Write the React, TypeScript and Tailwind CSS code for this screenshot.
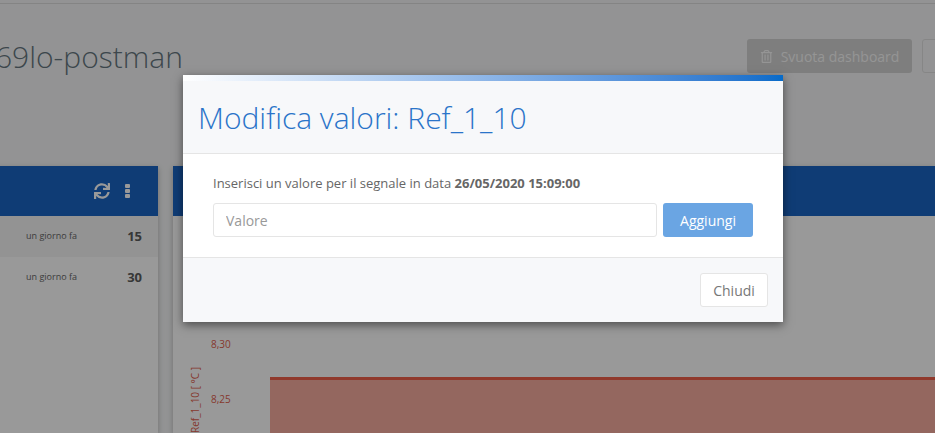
import { FaSync, FaRegTrashAlt } from "react-icons/fa";

const rows = [
  { when: "un giorno fa", value: 15, shaded: true },
  { when: "un giorno fa", value: 30, shaded: false },
];

export default function App() {
  return (
    <div className="relative h-[433px] w-[935px] overflow-hidden bg-[#f5f6f7] font-['Open_Sans',sans-serif]">
      {/* dashboard behind the dialog */}
      <div className="h-[4px] border-b border-[#dcdcdc] bg-[#f5f6f7]" />
      <div className="flex h-[162px] items-start justify-between">
        <h1 className="-ml-[5px] mt-[32px] whitespace-nowrap text-[30px] leading-[42px] font-light text-[#66767f]">
          69lo-postman
        </h1>
        <div className="mt-[35px] flex gap-[10px] -mr-[60px]">
          <button className="flex h-[34px] w-[165px] items-center justify-center gap-[8px] rounded-[3px] bg-[#d2d2d2] text-[14px] text-[#f8f8f8]">
            <FaRegTrashAlt className="h-[13px] w-[13px]" />
            Svuota dashboard
          </button>
          <button className="h-[34px] w-[73px] rounded-[3px] border border-[#e0e0e0] bg-[#f5f6f7]" />
        </div>
      </div>
      <div className="flex h-[267px] gap-[15px]">
        <div className="-ml-[20px] w-[178px] shrink-0 bg-white shadow-[0_2px_6px_rgba(0,0,0,0.25)]">
          <div className="flex h-[50px] items-center justify-end gap-[15px] bg-[#1965c3] pr-[28px] text-white">
            <FaSync className="h-[16px] w-[16px]" />
            <svg width="5" height="14" viewBox="0 0 5 14" fill="currentColor">
              <rect width="5" height="4" rx="1" />
              <rect y="5" width="5" height="4" rx="1" />
              <rect y="10" width="5" height="4" rx="1" />
            </svg>
          </div>
          {rows.map((row) => (
            <div
              key={row.value}
              className={`flex h-[41px] items-center justify-between pr-[16px] pl-[46px] ${row.shaded ? "bg-[#f5f5f5]" : "bg-white"}`}
            >
              <span className="-mt-[2px] text-[9px] text-[#666]">{row.when}</span>
              <span className="text-[13px] font-bold text-[#5c5c5c]">{row.value}</span>
            </div>
          ))}
        </div>
        <div className="relative flex-1 bg-white shadow-[0_2px_6px_rgba(0,0,0,0.25)]">
          <div className="h-[50px] bg-[#1965c3]" />
          <svg className="absolute top-[50px] left-0" width="762" height="217">
            <rect x="97" y="161" width="665" height="56" fill="#f7ac9e" />
            <rect x="97" y="161" width="665" height="3" fill="#f0604a" />
          </svg>
          <span className="absolute top-[171px] left-[38px] text-[10px] text-[#e0604e]">8,30</span>
          <span className="absolute top-[226px] left-[38px] text-[10px] text-[#e0604e]">8,25</span>
        </div>
      </div>
      <span className="absolute top-[433px] left-[189px] origin-top-left -rotate-90 whitespace-nowrap text-[10px] leading-[12px] text-[#e0604e]">
        Ref_1_10 [ °C ]
      </span>

      <div className="absolute inset-0 bg-black/40" />

      {/* dialog */}
      <div className="absolute top-[75px] left-[183px] w-[600px] bg-white shadow-[0_3px_9px_rgba(0,0,0,0.5)]">
        <div className="h-[6px] bg-gradient-to-r from-white to-[#056bc9]" />
        <div className="flex h-[73px] items-center border-b border-[#e5e5e5] bg-[#f7f8fa] px-[15px]">
          <h2 className="text-[30px] font-light text-[#2a74c9]">Modifica valori: Ref_1_10</h2>
        </div>
        <div className="h-[104px] border-b border-[#e5e5e5] px-[30px] pt-[19px]">
          <p className="text-[13px] leading-[20px] text-[#666]">
            Inserisci un valore per il segnale in data <b>26/05/2020 15:09:00</b>
          </p>
          <div className="mt-[10px] flex gap-[6px]">
            <input
              placeholder="Valore"
              className="h-[34px] w-[444px] rounded-[3px] border border-[#e5e5e5] px-[12px] text-[14px] placeholder:text-[#999]"
            />
            <button className="h-[34px] w-[90px] rounded-[3px] bg-[#6aa5e3] text-[14px] font-medium text-white">
              Aggiungi
            </button>
          </div>
        </div>
        <div className="flex h-[64px] items-center justify-end bg-[#f7f8fa] pr-[15px]">
          <button className="h-[34px] w-[68px] rounded-[3px] border border-[#e5e5e5] bg-white text-[14px] text-[#777]">
            Chiudi
          </button>
        </div>
      </div>
    </div>
  );
}
